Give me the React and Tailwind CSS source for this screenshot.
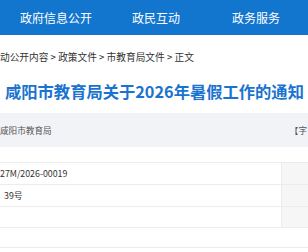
import React from "react";

const navItems = ["政府信息公开", "政民互动", "政务服务"];

const rows = [
  { text: "27M/2026-00019", pad: "pl-0", h: "h-[22px]", side: true },
  { text: "39号", pad: "pl-[4px]", h: "h-[22px]", side: true },
  { text: "", pad: "", h: "h-[21px]", side: true },
  { text: "", pad: "", h: "h-[20px]", side: false },
];

const App = () => {
  return (
    <div className="w-[308px] h-[252px] overflow-hidden bg-white font-['Noto_Sans_CJK_SC',sans-serif]">
      {/* top nav */}
      <nav className="h-[35px] bg-[#1276cf] flex items-center pl-[6px]">
        {navItems.map((item) => (
          <div key={item} className="w-[100px] shrink-0 text-center text-white text-[12px] leading-[35px]">
            {item}
          </div>
        ))}
      </nav>

      {/* breadcrumb */}
      <div className="mt-[12px] h-[20px] leading-[20px] text-[9.7px] text-[#333] whitespace-nowrap">
        动公开内容 &gt; 政策文件 &gt; 市教育局文件 &gt; 正文
      </div>

      {/* title */}
      <h1 className="mt-[12px] h-[24px] leading-[24px] pl-[5px] text-[16.3px] font-bold text-[#1a73cf] whitespace-nowrap">
        咸阳市教育局关于2026年暑假工作的通知
      </h1>

      {/* info bar */}
      <div className="mt-[10px] h-[34px] bg-[#f2f3f7] flex items-center justify-between pr-[1px] text-[8.6px] text-[#555] whitespace-nowrap">
        <span>咸阳市教育局</span>
        <span>【字</span>
      </div>

      {/* table */}
      <div className="h-[16px] border-b border-[#ececec]" />
      {rows.map((row, i) => (
        <div key={i} className={`flex ${row.h} border-b border-[#ececec] text-[8.8px] text-[#333] whitespace-nowrap`}>
          <div className={`flex-1 leading-[21px] ${row.pad}`}>{row.text}</div>
          {row.side && <div className="w-[27px] bg-[#f6f6f6] border-l border-[#ececec]" />}
        </div>
      ))}
    </div>
  );
};

export default App;
